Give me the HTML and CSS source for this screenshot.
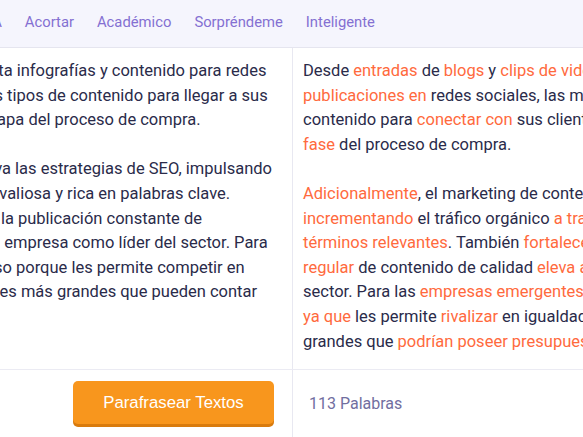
FILE: index.html
```html
<!DOCTYPE html>
<html lang="es">
<head>
<meta charset="utf-8">
<title>Parafrasear Textos</title>
<link rel="stylesheet" href="styles.css">
</head>
<body>
<div class="app">
  <nav class="modes">
    <span class="mode">Formal</span>
    <span class="mode">Creativo</span>
    <span class="mode">Humanizar IA</span>
    <span class="mode">Acortar</span>
    <span class="mode">Académico</span>
    <span class="mode">Sorpréndeme</span>
    <span class="mode">Inteligente</span>
  </nav>
  <div class="panes">
    <section class="pane pane-in">
      <p>Desde publicaciones de blog y video hasta infografías y contenido para redes<br>sociales, las empresas utilizan diferentes tipos de contenido para llegar a sus<br>clientes activos y potenciales en cada etapa del proceso de compra.</p>
      <p>Además, el marketing de contenidos eleva las estrategias de SEO, impulsando<br>su tráfico orgánico creando información valiosa y rica en palabras clave.<br>También fortalece la credibilidad, ya que la publicación constante de<br>contenido de calidad posicionará así a la empresa como líder del sector. Para<br>las startups, eso es especialmente valioso porque les permite competir en<br>igualdad de condiciones con competidores más grandes que pueden contar<br>con presupuestos mayores.</p>
    </section>
    <section class="pane pane-out">
      <p>Desde <span class="hl">entradas</span> de <span class="hl">blogs</span> y <span class="hl">clips de video</span> hasta infografías y contenido para<br><span class="hl">publicaciones en</span> redes sociales, las marcas <span class="hl">emplean</span> distintos tipos de<br>contenido para <span class="hl">conectar con</span> sus clientes <span class="hl">en cada</span><br><span class="hl">fase</span> del proceso de compra.</p>
      <p><span class="hl">Adicionalmente</span>, el marketing de contenidos <span class="hl">potencia</span> las estrategias de SEO,<br><span class="hl">incrementando</span> el tráfico orgánico <span class="hl">a través de</span> información valiosa y rica en<br><span class="hl">términos relevantes</span>. También <span class="hl">fortalece</span> la confianza: la publicación<br><span class="hl">regular</span> de contenido de calidad <span class="hl">eleva a</span> la empresa como líder del<br>sector. Para las <span class="hl">empresas emergentes</span>, esto es <span class="hl">particularmente</span> valioso,<br><span class="hl">ya que</span> les permite <span class="hl">rivalizar</span> en igualdad de condiciones con empresas más<br>grandes que <span class="hl">podrían poseer presupuestos</span> mayores.</p>
    </section>
  </div>
  <div class="footer">
    <div class="foot-left">
      <button class="btn" type="button">Parafrasear Textos</button>
    </div>
    <div class="foot-right">113 Palabras</div>
  </div>
</div>
</body>
</html>
```
FILE: styles.css
```css
html, body {
  margin: 0;
  padding: 0;
  background: #ffffff;
}
body {
  overflow: hidden;
  font-family: Roboto, "Liberation Sans", Arial, sans-serif;
}
.app {
  width: 1164px;
  margin-left: -298px;
}
.modes {
  display: flex;
  align-items: center;
  gap: 23px;
  height: 43px;
  padding: 0 0 4px 64px;
  background: #f5f5fd;
  border-bottom: 1px solid #e5e5ef;
  font-size: 14.8px;
  color: #8470d2;
  white-space: nowrap;
}
.panes {
  display: grid;
  grid-template-columns: 590px 574px;
  height: 321px;
  border-bottom: 1px solid #ebebf3;
}
.pane {
  padding: 11px 20px 0 0;
  overflow: hidden;
  font-size: 16.5px;
  line-height: 24.6px;
  color: #2a2b4a;
  white-space: nowrap;
}
.pane-out {
  border-left: 1px solid #e8e8f1;
  padding-left: 10px;
}
.pane p {
  margin: 0 0 24.6px;
}
.pane p:last-child {
  margin-bottom: 0;
}
.hl {
  color: #ff6a3d;
}
.footer {
  display: grid;
  grid-template-columns: 590px 574px;
  height: 67px;
}
.foot-left {
  display: flex;
  justify-content: flex-end;
  align-items: flex-start;
  padding: 11px 18px 0 0;
}
.btn {
  width: 201px;
  height: 43px;
  border: 0;
  border-radius: 5px;
  background: #f8961d;
  box-shadow: 0 3px 0 #d97b0d;
  color: #ffffff;
  font-family: "Liberation Sans", Arial, sans-serif;
  font-size: 16.8px;
  cursor: pointer;
}
.foot-right {
  display: flex;
  align-items: center;
  padding-left: 16px;
  border-left: 1px solid #e8e8f1;
  font-size: 16px;
  color: #716e9f;
}
```
